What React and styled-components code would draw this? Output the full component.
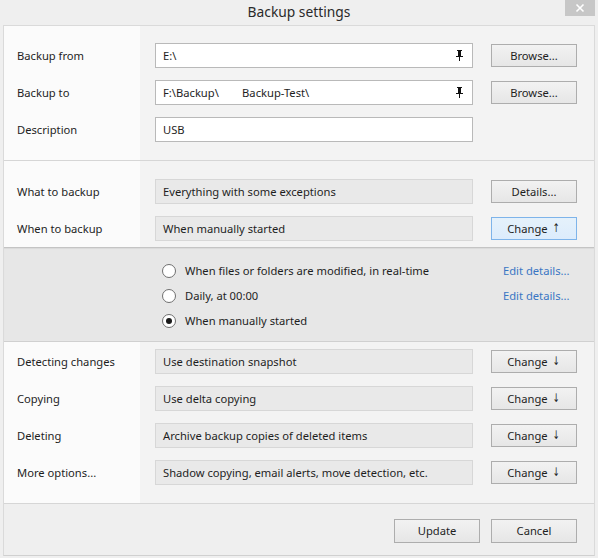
import React from "react";
import styled, { createGlobalStyle, css } from "styled-components";

const Global = createGlobalStyle`
  html, body { margin: 0; padding: 0; background: #efefef; }
  body { font-family: "Noto Sans", "Open Sans", sans-serif; font-size: 11.2px; color: #1e1e1e; }
  * { box-sizing: border-box; }
`;

const Window = styled.div`
  width: 598px;
  height: 558px;
  background: #efefef;
  display: flex;
  flex-direction: column;
`;

const TitleBar = styled.div`
  position: relative;
  height: 25px;
  display: flex;
  align-items: center;
  justify-content: center;
  font-size: 13.8px;
  color: #2a2a2a;
  padding-bottom: 3px;
`;

const CloseButton = styled.div`
  position: absolute;
  top: 0;
  right: 3px;
  width: 30px;
  height: 16px;
  background: #c7c7c7;
  display: flex;
  align-items: center;
  justify-content: center;
`;

const Body = styled.div`
  margin: 0 3px;
  border: 1px solid #dadada;
  border-bottom: 1px solid #d0d0d0;
  height: 531px;
  display: flex;
  flex-direction: column;
`;

const Section = styled.div`
  display: flex;
  flex-direction: column;
  gap: 12px;
  padding: ${(p) => p.$pad};
  background: linear-gradient(to right, #fbfbfb 136px, #f3f3f3 136px);
  border-bottom: 1px solid ${(p) => p.$line || "#d6d6d6"};
`;

const Expanded = styled.div`
  background: #e7e7e7;
  padding: 10px 0 8px 0;
  border-bottom: 1px solid #d0d0d0;
  box-shadow: inset 0 1px 1px rgba(0,0,0,0.06);
`;

const Row = styled.div`
  display: grid;
  grid-template-columns: 120px 318px 86px;
  column-gap: 18px;
  align-items: center;
  height: 25px;
  padding-left: 13px;
`;

const Label = styled.div`
  white-space: nowrap;
`;

const fieldBase = css`
  height: 25px;
  display: flex;
  align-items: center;
  padding: 0 7px 1px 7px;
  white-space: nowrap;
  overflow: hidden;
`;

const Input = styled.div`
  ${fieldBase}
  background: #ffffff;
  border: 1px solid #b9b9b9;
  justify-content: space-between;
  padding-right: 9px;
`;

const ReadOnly = styled.div`
  ${fieldBase}
  background: #e9e9e9;
  border: 1px solid #d7d7d7;
`;

const Button = styled.div`
  height: ${(p) => (p.$tall ? "24px" : "23px")};
  display: flex;
  align-items: center;
  justify-content: center;
  padding-bottom: 1px;
  white-space: nowrap;
  border: 1px solid ${(p) => (p.$active ? "#7eb4ea" : "#adadad")};
  background: ${(p) =>
    p.$active
      ? "linear-gradient(#e5f1fb, #dcecfc)"
      : "linear-gradient(#f2f2f2, #e6e6e6)"};
  width: 86px;
`;

const Arrow = styled.span`
  font-size: 12px;
  margin-left: 3px;
  font-family: "DejaVu Sans", sans-serif;
  transform: scaleX(0.7);
  display: inline-block;
`;

const RadioRow = styled.div`
  display: grid;
  grid-template-columns: 318px auto;
  height: 25px;
  align-items: center;
  padding-left: 158px;
`;

const RadioLabel = styled.div`
  display: flex;
  align-items: center;
  gap: 9px;
  white-space: nowrap;
`;

const RadioCircle = styled.span`
  width: 14px;
  height: 14px;
  border-radius: 50%;
  border: 1px solid #6f6f6f;
  background: #fff;
  display: flex;
  align-items: center;
  justify-content: center;
  &::after {
    content: "";
    display: ${(p) => (p.$checked ? "block" : "none")};
    width: 6px;
    height: 6px;
    border-radius: 50%;
    background: #1a1a1a;
  }
`;

const Link = styled.div`
  color: #3976c4;
  padding-left: 23px;
  white-space: nowrap;
`;

const Footer = styled.div`
  flex: 1;
  display: flex;
  justify-content: flex-end;
  gap: 11px;
  padding: 15px 17px 0 0;
`;

const Pin = () => (
  <svg width="7" height="11" viewBox="0 0 7 11">
    <rect x="1" y="0" width="5" height="1" fill="#111" />
    <rect x="2" y="1" width="3" height="5" fill="#111" />
    <rect x="0" y="6" width="7" height="1" fill="#111" />
    <rect x="3" y="7" width="1" height="4" fill="#111" />
  </svg>
);

const CloseX = () => (
  <svg width="10" height="10" viewBox="0 0 10 10">
    <path d="M1.5 1.5 L8.5 8.5 M8.5 1.5 L1.5 8.5" stroke="#fff" strokeWidth="1.6" />
  </svg>
);

export default function App() {
  return (
    <>
      <Global />
      <Window>
        <TitleBar>
          Backup settings
          <CloseButton>
            <CloseX />
          </CloseButton>
        </TitleBar>
        <Body>
          <Section $pad="17px 0 18px 0">
            <Row>
              <Label>Backup from</Label>
              <Input>
                <span>E:\</span>
                <Pin />
              </Input>
              <Button>Browse...</Button>
            </Row>
            <Row>
              <Label>Backup to</Label>
              <Input>
                <span>F:\Backup\&nbsp;&nbsp;&nbsp;&nbsp;&nbsp;&nbsp;&nbsp;&nbsp;Backup-Test\</span>
                <Pin />
              </Input>
              <Button>Browse...</Button>
            </Row>
            <Row>
              <Label>Description</Label>
              <Input>
                <span>USB</span>
              </Input>
              <div />
            </Row>
          </Section>
          <Section $pad="18px 0 6px 0" $line="#c4c4c4">
            <Row>
              <Label>What to backup</Label>
              <ReadOnly>Everything with some exceptions</ReadOnly>
              <Button>Details...</Button>
            </Row>
            <Row>
              <Label>When to backup</Label>
              <ReadOnly>When manually started</ReadOnly>
              <Button $active>
                Change<Arrow>↑</Arrow>
              </Button>
            </Row>
          </Section>
          <Expanded>
            <RadioRow>
              <RadioLabel>
                <RadioCircle />
                When files or folders are modified, in real-time
              </RadioLabel>
              <Link>Edit details...</Link>
            </RadioRow>
            <RadioRow>
              <RadioLabel>
                <RadioCircle />
                Daily, at 00:00
              </RadioLabel>
              <Link>Edit details...</Link>
            </RadioRow>
            <RadioRow>
              <RadioLabel>
                <RadioCircle $checked />
                When manually started
              </RadioLabel>
              <div />
            </RadioRow>
          </Expanded>
          <Section $pad="7px 0 18px 0">
            {[
              ["Detecting changes", "Use destination snapshot"],
              ["Copying", "Use delta copying"],
              ["Deleting", "Archive backup copies of deleted items"],
              ["More options...", "Shadow copying, email alerts, move detection, etc."],
            ].map(([l, v]) => (
              <Row key={l}>
                <Label>{l}</Label>
                <ReadOnly>{v}</ReadOnly>
                <Button>
                  Change<Arrow>↓</Arrow>
                </Button>
              </Row>
            ))}
          </Section>
          <Footer>
            <Button $tall>Update</Button>
            <Button $tall>Cancel</Button>
          </Footer>
        </Body>
      </Window>
    </>
  );
}
